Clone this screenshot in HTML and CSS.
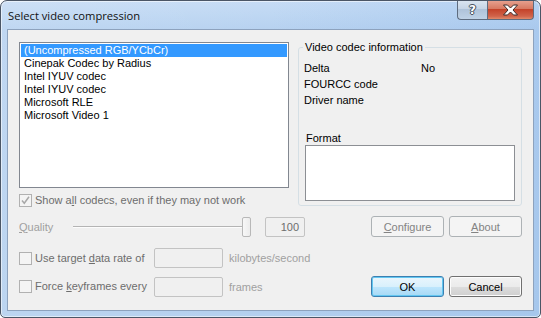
FILE: index.html
```html
<!DOCTYPE html>
<html lang="en">
<head>
  <meta charset="UTF-8" />
  <title>Select video compression</title>
  <link rel="stylesheet" href="styles.css">
</head>
<body>
  <div class="window">
    <div class="titlebar">
      <div class="caption">Select video compression</div>
      <div class="caption-buttons">
        <div class="cap-btn help">?</div>
        <div class="cap-btn close">
          <svg width="17" height="12" viewBox="0 0 17 12">
            <path d="M1.5 1 L5.5 1 L8.5 4 L11.5 1 L15.5 1 L11 6 L15.5 11 L11.5 11 L8.5 8 L5.5 11 L1.5 11 L6 6 Z" fill="#fff" stroke="#3a2a28" stroke-width="1" stroke-linejoin="round"/>
          </svg>
        </div>
      </div>
    </div>

    <div class="client">
      <div class="top">
        <div class="left-col">
          <div class="listbox">
            <div class="item selected">(Uncompressed RGB/YCbCr)</div>
            <div class="item">Cinepak Codec by Radius</div>
            <div class="item">Intel IYUV codec</div>
            <div class="item">Intel IYUV codec</div>
            <div class="item">Microsoft RLE</div>
            <div class="item">Microsoft Video 1</div>
          </div>
          <div class="check-row disabled-dark">
            <span class="check">
              <svg width="11" height="11" viewBox="0 0 11 11"><path d="M2 5.5 L4.3 8.2 L9 1.8" fill="none" stroke="#a8a8a8" stroke-width="1.5"/></svg>
            </span>
            <span>Show a<u>l</u>l codecs, even if they may not work</span>
          </div>
        </div>

        <fieldset class="group">
          <legend>Video codec information</legend>
          <div class="info">
            <div class="info-row"><span class="info-key">Delta</span><span>No</span></div>
            <div class="info-row"><span class="info-key">FOURCC code</span></div>
            <div class="info-row"><span class="info-key">Driver name</span></div>
          </div>
          <div class="format-label">Format</div>
          <div class="format-box"></div>
        </fieldset>
      </div>

      <div class="row quality-row">
        <span class="quality-label"><u>Q</u>uality</span>
        <div class="slider">
          <div class="track"></div>
          <div class="thumb"></div>
        </div>
        <div class="edit small">100</div>
        <div class="buttons">
          <div class="btn disabled"><u>C</u>onfigure</div>
          <div class="btn disabled"><u>A</u>bout</div>
        </div>
      </div>

      <div class="row rate-row">
        <div class="check-row disabled-dark label-block">
          <span class="check"></span>
          <span>Use target <u>d</u>ata rate of</span>
        </div>
        <div class="edit wide"></div>
        <span class="unit">kilobytes/second</span>
      </div>

      <div class="row key-row">
        <div class="check-row disabled-dark label-block">
          <span class="check"></span>
          <span>Force <u>k</u>eyframes every</span>
        </div>
        <div class="edit wide"></div>
        <span class="unit">frames</span>
        <div class="buttons">
          <div class="btn default">OK</div>
          <div class="btn normal">Cancel</div>
        </div>
      </div>
    </div>
  </div>
</body>
</html>
```

FILE: styles.css
```css
body {
  margin: 0;
  padding: 0;
  background: #ffffff;
  font-family: "Liberation Sans", Arial, sans-serif;
  font-size: 11px;
  color: #000;
}
u {
  text-decoration: underline;
  text-underline-offset: 1px;
}
.window {
  box-sizing: border-box;
  width: 541px;
  height: 318px;
  border: 1px solid #4b5666;
  border-radius: 7px 7px 5px 5px;
  padding: 0 6px 6px 6px;
  display: flex;
  flex-direction: column;
  background:
    linear-gradient(to right, rgba(255,255,255,0.12), rgba(255,255,255,0) 50%, rgba(120,170,230,0.22)),
    linear-gradient(to bottom, #c6dcf5, #b7d2f0 28px, #b3cfee);
  box-shadow: inset 0 0 0 1px rgba(255,255,255,0.55);
  overflow: hidden;
}
.titlebar {
  height: 28px;
  display: flex;
  justify-content: space-between;
}
.caption {
  font-family: "Open Sans", "Noto Sans", sans-serif;
  font-size: 11.2px;
  color: #111;
  padding-left: 1px;
  line-height: 29px;
}
.caption-buttons {
  display: flex;
  margin-top: -1px;
  height: 20px;
}
.cap-btn {
  box-sizing: border-box;
  height: 20px;
  border: 1px solid #5e6c7f;
  border-top: none;
  display: flex;
  align-items: center;
  justify-content: center;
}
.help {
  width: 30px;
  border-right: none;
  border-radius: 0 0 0 4px;
  background: linear-gradient(to bottom, #dce6f1, #c6d5e6 45%, #afc3d9 50%, #bfd2e6);
  color: #fff;
  font-family: "DejaVu Sans", sans-serif;
  font-weight: bold;
  font-size: 12px;
  text-shadow: 0 0 1px #2d3642, 1px 0 0 #4a5564, -1px 0 0 #4a5564, 0 1px 0 #4a5564, 0 -1px 0 #4a5564;
}
.close {
  width: 47px;
  border-radius: 0 0 4px 0;
  background: linear-gradient(to bottom, #e8a493, #d77a63 45%, #c4432a 50%, #d0634a 85%, #e08a6a);
}
.client {
  box-sizing: border-box;
  height: 282px;
  border: 1px solid #8da2bd;
  background: #f0f0f0;
  padding: 12px 11px 0 11px;
}
.top {
  display: flex;
  gap: 9px;
}
.left-col {
  width: 270px;
}
.listbox {
  box-sizing: border-box;
  height: 146px;
  border: 1px solid #828790;
  background: #fff;
  padding: 1px;
}
.item {
  height: 13px;
  line-height: 13px;
  padding-left: 3px;
  white-space: nowrap;
}
.item.selected {
  background: #3399ff;
  color: #fff;
}
.check-row {
  display: flex;
  align-items: center;
  gap: 3px;
  height: 13px;
  line-height: 13px;
}
.left-col .check-row {
  margin-top: 6px;
}
.disabled-dark {
  color: #6d6d6d;
}
.check {
  box-sizing: border-box;
  width: 13px;
  height: 13px;
  border: 1px solid #b1b1b1;
  background: #f4f4f4;
  display: flex;
  align-items: center;
  justify-content: center;
  flex: none;
}
.group {
  box-sizing: border-box;
  width: 224px;
  height: 165px;
  margin: -1px 0 0 0;
  padding: 0 6px 0 5px;
  border: 1px solid #d5dfe5;
  border-radius: 3px;
  min-width: 0;
}
.group legend {
  padding: 0 2px;
  margin-left: -1px;
  line-height: 13px;
}
.info {
  margin-top: 8px;
}
.info-row {
  display: flex;
  height: 16px;
  line-height: 13px;
}
.info-key {
  width: 117px;
}
.format-label {
  margin-top: 22px;
  padding-left: 2px;
  line-height: 13px;
}
.format-box {
  box-sizing: border-box;
  height: 56px;
  margin-left: 1px;
  border: 1px solid #8c8f94;
  background: #fff;
}
.row {
  display: flex;
  align-items: center;
  height: 21px;
}
.quality-row {
  margin-top: 9px;
}
.rate-row {
  margin-top: 11px;
  height: 20px;
}
.key-row {
  margin-top: 8px;
}
.quality-label {
  width: 54px;
  color: #a0a0a0;
}
.slider {
  width: 178px;
  height: 21px;
  display: flex;
  align-items: center;
}
.track {
  flex: 1;
  height: 1px;
  border-top: 1px solid #b4b4b4;
  background: #fcfcfc;
}
.thumb {
  box-sizing: border-box;
  width: 9px;
  height: 20px;
  border: 1px solid #b8b8b8;
  border-radius: 2px;
  background: linear-gradient(to right, #f7f7f7, #ececec);
}
.edit {
  box-sizing: border-box;
  height: 20px;
  border: 1px solid #c3c3c3;
  border-radius: 2px;
  background: #f0f0f0;
  color: #6d6d6d;
  line-height: 18px;
}
.edit.small {
  width: 40px;
  margin-left: 14px;
  text-align: right;
  padding-right: 5px;
}
.edit.wide {
  width: 69px;
}
.label-block {
  width: 135px;
}
.unit {
  margin-left: 6px;
  color: #a0a0a0;
}
.buttons {
  margin-left: auto;
  display: flex;
  gap: 5px;
}
.btn {
  box-sizing: border-box;
  width: 73px;
  height: 21px;
  border-radius: 3px;
  display: flex;
  align-items: center;
  justify-content: center;
}
.btn.disabled {
  border: 1px solid #adb2b5;
  background: #f4f4f4;
  color: #838383;
}
.btn.normal {
  border: 1px solid #707070;
  background: linear-gradient(to bottom, #f2f2f2, #ebebeb 50%, #dddddd 50%, #cfcfcf);
  box-shadow: inset 0 0 0 1px #fcfcfc;
}
.btn.default {
  border: 1px solid #3c7fb1;
  background: linear-gradient(to bottom, #eaf6fd, #d9f0fc 50%, #bee6fd 50%, #a7d9f5);
  box-shadow: inset 0 0 0 1px #63c7f1;
}
```
